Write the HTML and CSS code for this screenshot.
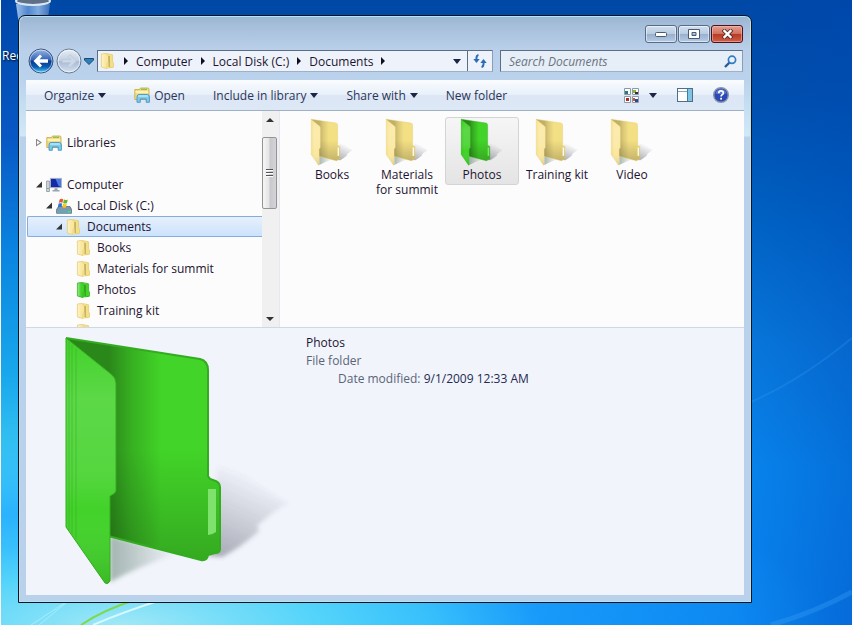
FILE: index.html
```html
<!DOCTYPE html>
<html lang="en">
<head>
    <meta charset="utf-8">
    <title>Documents</title>
    <link rel="stylesheet" href="styles.css">
</head>
<body>

<!-- shared icons -->
<svg class="defs" aria-hidden="true">
    <defs>
        <linearGradient id="g-back" x1="0" y1="0" x2="1" y2="0">
            <stop offset="0.28" stop-color="#000" stop-opacity=".36"/>
            <stop offset="0.42" stop-color="#000" stop-opacity=".18"/>
            <stop offset="0.62" stop-color="#000" stop-opacity="0"/>
        </linearGradient>
        <linearGradient id="g-low" x1="0" y1="0" x2="0" y2="1">
            <stop offset="0.5" stop-color="#000" stop-opacity="0"/>
            <stop offset="1" stop-color="#000" stop-opacity=".2"/>
        </linearGradient>
        <linearGradient id="g-front" x1="0" y1="0" x2="0" y2="1">
            <stop offset="0" stop-color="#fff" stop-opacity="0"/>
            <stop offset="0.25" stop-color="#fff" stop-opacity=".14"/>
            <stop offset="0.55" stop-color="#fff" stop-opacity=".1"/>
            <stop offset="0.7" stop-color="#fff" stop-opacity="0"/>
            <stop offset="1" stop-color="#000" stop-opacity=".12"/>
        </linearGradient>
        <linearGradient id="g-shade" x1="0.1" y1="0.95" x2="0.45" y2="0.05">
            <stop offset="0" stop-color="#556" stop-opacity=".45"/>
            <stop offset="0.5" stop-color="#556" stop-opacity=".22"/>
            <stop offset="1" stop-color="#556" stop-opacity="0"/>
        </linearGradient>
        <linearGradient id="g-shade2" x1="0" y1="0" x2="1" y2="0">
            <stop offset="0" stop-color="#465" stop-opacity=".45"/>
            <stop offset="1" stop-color="#465" stop-opacity="0"/>
        </linearGradient>
        <filter id="soft"><feGaussianBlur stdDeviation="2"/></filter>
        <linearGradient id="g-orb" x1="0" y1="0" x2="0" y2="1">
            <stop offset="0" stop-color="#9bb9e6"/>
            <stop offset="0.46" stop-color="#2f62b4"/>
            <stop offset="0.5" stop-color="#07398f"/>
            <stop offset="0.75" stop-color="#0a5cb8"/>
            <stop offset="1" stop-color="#52d8fa"/>
        </linearGradient>
        <linearGradient id="g-orb2" x1="0" y1="0" x2="0" y2="1">
            <stop offset="0" stop-color="#e6edf6"/>
            <stop offset="0.48" stop-color="#c3d0e2"/>
            <stop offset="0.52" stop-color="#a9bcd4"/>
            <stop offset="1" stop-color="#d4e1f0"/>
        </linearGradient>
        <linearGradient id="g-gold" x1="0" y1="0" x2="1" y2="0">
            <stop offset="0" stop-color="#fff" stop-opacity=".5"/>
            <stop offset="1" stop-color="#fff" stop-opacity="0"/>
        </linearGradient>
        <linearGradient id="g-bin" x1="0" y1="0" x2="1" y2="0">
            <stop offset="0" stop-color="#9cc0e8"/>
            <stop offset="0.35" stop-color="#4f86cc"/>
            <stop offset="0.65" stop-color="#7fabdf"/>
            <stop offset="1" stop-color="#3a6fb8"/>
        </linearGradient>

        <symbol id="folder" viewBox="0 0 256 256">
            <path d="M168 134 L196 144 Q214 158 238 171 Q222 180 207 194 L209 199 Q190 216 172 225 L158 224Z" fill="url(#g-shade)" filter="url(#soft)"/>
            <path d="M60 204 L128 221 Q92 233 60 250Z" fill="url(#g-shade2)" filter="url(#soft)"/>
            <path class="back" d="M16 6 L150 27 Q158 29 158 38 L158 144 Q159 147 163 148 Q170 150 170 155 L170 217 Q170 221 165 221 L158 223 Q157 229 151 228 L58 204 L40 60Z"/>
            <path class="dark" d="M16 6 L150 27 Q158 29 158 38 L158 144 Q159 147 163 148 Q170 150 170 155 L170 217 Q170 221 165 221 L158 223 Q157 229 151 228 L58 204 L40 60Z" fill="url(#g-back)"/>
            <path class="edge" d="M16 6 L150 27 Q158 29 158 38 L158 144 Q159 147 163 148 Q170 150 170 155 L170 217 Q170 221 165 221 L158 223 Q157 229 151 228 L58 204" fill="url(#g-low)" stroke-width="2"/>
            <path class="tab" d="M158 157 H166 V200 Q162 203 158 203Z"/>
            <path class="front" d="M16 6 L61 42 Q66 46 66 51 L66 159 Q65 162 60 164 L60 249 Q58 253 55 251 L16 195Z"/>
            <path class="edge" d="M16 6 L61 42 Q66 46 66 51 L66 159 Q65 162 60 164 L60 249 Q58 253 55 251 L16 195Z" fill="url(#g-front)" stroke-width="1"/>
            <path class="rib" d="M19 10 V198 M22 13 V202 M26 17 V207" fill="none" stroke-width="1"/>
        </symbol>

        <symbol id="folder-sm" viewBox="0 0 16 16">
            <path class="back" d="M6 1 L12 1.6 L12.6 2 V9 L13.5 10 V14 L12 15 H6Z"/>
            <path class="front" d="M1.4 1 L6.2 .4 L8.4 3 V15 L6.6 15.8 L1.4 14Z"/>
            <path d="M1.4 1 L5 .6 V15 L1.4 14Z" fill="url(#g-gold)"/>
            <path class="edge" d="M1.4 14 V1 L6.2 .4 L12.6 1.8 V9 L13.5 10 V14.2 L8.4 15 M6.2 .6 L8.4 3 V9 L7 10.5 V15.6 L1.4 14" fill="none" stroke-width=".7"/>
            <path d="M9.2 3 V14" stroke="#000" stroke-opacity=".22" stroke-width="1.4"/>
        </symbol>

        <symbol id="library" viewBox="0 0 16 16">
            <path d="M.8 2.5 H5.5 L6.5 1 H14 Q15 1 15 2.5 V12.5 H.8Z" fill="#f3dd7c" stroke="#c9a53d" stroke-width=".8"/>
            <path d="M1.5 5 H14.3" stroke="#fffbd8" stroke-width="1.4"/>
            <path d="M7 2.3 H13" stroke="#6dbb5b" stroke-width="1"/>
            <path d="M3 9.500 Q3 7.500 5 7.500 H13 Q15.400 7.500 15.400 10 V15.300 H12.200 V12 H6.300 V15.300 H3Z" fill="#7ccbee" stroke="#3a8dc0" stroke-width=".8"/>
            <path d="M4.2 9 H14" stroke="#d8f3ff" stroke-width="1"/>
        </symbol>

        <symbol id="computer" viewBox="0 0 16 16">
            <path d="M.6 4 H3.4 V14.5 H.6Z" fill="#d4d8dc" stroke="#7d858e" stroke-width=".7"/>
            <path d="M1.2 11.5 H2.8" stroke="#4bb44b"/>
            <path d="M4.4 1.4 H15.4 V10.6 H4.4Z" fill="#1528a8" stroke="#a9b4c4" stroke-width="1"/>
            <path d="M9.5 2 H15 V10 L12.5 9Z" fill="#4a78e4"/>
            <path d="M8.5 11.2 H11.5 V13 H13.5 V14.6 H6.5 V13 H8.5Z" fill="#9aa4b0"/>
        </symbol>

        <symbol id="disk" viewBox="0 0 16 16">
            <path d="M2.5 8.5 H14 L15.6 11.5 V15.3 H.6 V11.5Z" fill="#7f97a6" stroke="#4d6270" stroke-width=".7"/>
            <path d="M1 12 H15.2 V15 H1Z" fill="#6ba3b8"/>
            <path d="M12 13.6 H14.4" stroke="#3df05a" stroke-width="1.2"/>
            <path d="M3.6 1.4 Q5.5 .2 7.2 1.3 L6.4 4.8 Q4.6 3.9 2.8 4.9Z" fill="#e9562a"/>
            <path d="M7.9 1.6 Q9.8 2.6 11.8 1.5 L11 5 Q9 6 7.1 5Z" fill="#6bb52e"/>
            <path d="M2.6 5.6 Q4.5 4.7 6.2 5.6 L5.4 9.2 Q3.6 8.3 1.8 9.2Z" fill="#2b74d2"/>
            <path d="M7 5.8 Q8.8 6.7 10.8 5.7 L10 9.2 Q8 10.2 6.2 9.3Z" fill="#f7c21d"/>
        </symbol>
    </defs>
</svg>

<div class="desktop">
    <svg class="rays" viewBox="0 0 851 625" preserveAspectRatio="none" aria-hidden="true">
        <path d="M80 625 Q102 610 134 600" stroke="#7fd84a" stroke-width="2"/>
        <path d="M92 625 Q122 612 160 600" stroke="#d6f8ff" stroke-width="2"/>
        <path d="M30 625 L68 600 M38 625 L66 602" stroke="#a5ecff" stroke-width="1"/>
        <path d="M750 402 Q800 380 851 338" stroke="#3aa0f5" stroke-opacity=".25" stroke-width="2"/>
        <path d="M770 625 Q815 612 851 592" stroke="#3aa0f5" stroke-opacity=".35" stroke-width="5"/>
    </svg>

    <div class="bin">
        <svg width="36" height="48" viewBox="0 0 36 48" aria-hidden="true">
            <path d="M1 4 L7 46 H29 L35 4Z" fill="url(#g-bin)"/>
            <ellipse cx="18" cy="1" rx="17" ry="4" fill="#5e6f86" stroke="#d9e6f4" stroke-width="2"/>
        </svg>
        <span>Recycle Bin</span>
    </div>

    <main class="window">
        <div class="caption">
            <button class="cap" aria-label="Minimize"><svg width="12" height="5" viewBox="0 0 12 5"><rect x=".5" y=".5" width="11" height="4" rx="1" fill="#fff" stroke="#4a5a70"/></svg></button>
            <button class="cap" aria-label="Maximize"><svg width="12" height="10" viewBox="0 0 12 10"><path d="M.5 .5 H11.500 V9.500 H.5Z M4 3.500 H8 V6.500 H4Z" fill="#fff" fill-rule="evenodd" stroke="#4a5a70"/></svg></button>
            <button class="cap close" aria-label="Close"><svg width="13" height="10" viewBox="0 0 13 10"><path d="M3.500 2 L9.500 8 M9.500 2 L3.500 8" stroke="#5a2a2a" stroke-width="4" stroke-linecap="square"/><path d="M3.500 2 L9.500 8 M9.500 2 L3.500 8" stroke="#fff" stroke-width="2.400" stroke-linecap="square"/></svg></button>
        </div>

        <div class="nav">
            <div class="travel">
                <button class="orb" aria-label="Back"><svg width="26" height="26" viewBox="0 0 26 26"><circle cx="13" cy="13" r="12" fill="url(#g-orb)" stroke="#3d5478"/><circle cx="13" cy="13" r="11" fill="none" stroke="#fff" stroke-opacity=".5"/><path d="M5.500 13 L12 6.500 L14 8.500 L11.500 11.300 H20 V14.700 H11.500 L14 17.500 L12 19.500Z" fill="#fff"/></svg></button>
                <button class="orb" aria-label="Forward"><svg width="26" height="26" viewBox="0 0 26 26"><circle cx="13" cy="13" r="12" fill="url(#g-orb2)" stroke="#6b7d96"/><circle cx="13" cy="13" r="10.800" fill="none" stroke="#fff" stroke-opacity=".6"/><path d="M20.500 13 L14 6.500 L12 8.500 L14.500 11.300 H6 V14.700 H14.500 L12 17.500 L14 19.500Z" fill="#ccd8e8" stroke="#b4c3d6" stroke-width=".6"/></svg></button>
                <button class="recent" aria-label="Recent pages"><svg width="10" height="7" viewBox="0 0 10 7"><path d="M.5 .5 H9.500 V2 L5 6.500 L.5 2Z" fill="#2d7fb8" stroke="#174a78"/></svg></button>
            </div>
            <div class="address">
                <svg class="ico" width="16" height="16"><use href="#folder-sm"/></svg>
                <i class="arrow"></i>
                <a href="#">Computer</a>
                <i class="arrow"></i>
                <a href="#">Local Disk (C:)</a>
                <i class="arrow"></i>
                <a href="#">Documents</a>
                <i class="arrow"></i>
                <button class="history" aria-label="Previous locations"><i class="down"></i></button>
                <button class="refresh" aria-label="Refresh"><svg width="14" height="14" viewBox="0 0 14 14"><path d="M5.500 1 Q3 1.500 3.500 6" fill="none" stroke="#2d6cb5" stroke-width="2"/><path d="M.3 5 H6.700 L3.500 9Z" fill="#2d6cb5"/><path d="M8.500 13 Q11 12.500 10.500 8" fill="none" stroke="#2d6cb5" stroke-width="2"/><path d="M7.300 9 H13.700 L10.500 5Z" fill="#2d6cb5"/></svg></button>
            </div>
            <div class="search">
                <input type="text" placeholder="Search Documents" aria-label="Search Documents">
                <svg width="13" height="13" viewBox="0 0 13 13" aria-hidden="true"><path d="M1 12 L5.500 7.500" stroke="#2a5a9c" stroke-width="2.400"/><circle cx="8" cy="4.800" r="3.600" fill="#e4f2fc" stroke="#3579c0" stroke-width="1.700"/></svg>
            </div>
        </div>

        <div class="client">
            <div class="toolbar">
                <button>Organize<i class="down"></i></button>
                <button class="open"><svg width="16" height="16"><use href="#library"/></svg>Open</button>
                <button>Include in library<i class="down"></i></button>
                <button>Share with<i class="down"></i></button>
                <button>New folder</button>
                <div class="right">
                    <button aria-label="Change view">
                        <svg width="15" height="15" viewBox="0 0 15 15"><path d="M.5 .5 H6.500 V6.500 H.5Z M8.500 .5 H14.500 V6.500 H8.500Z M.5 8.500 H6.500 V14.500 H.5Z M8.500 8.500 H14.500 V14.500 H8.500Z" fill="#fff" stroke="#8b99a8"/><path d="M1 3 H4 V6 H1Z" fill="#2e7d6c"/><path d="M9 2 H12 V5 H9Z" fill="#8cb82c"/><path d="M11 4 H14 V6 H11Z" fill="#333"/><path d="M2 10 H5 V13 H2Z" fill="#b22a1c"/><path d="M9 10 H11 V13 H9Z" fill="#d2502a"/><path d="M11 11 H14 V14 H11Z" fill="#264a9c"/></svg>
                        <i class="down"></i>
                    </button>
                    <button aria-label="Preview pane"><svg width="16" height="14" viewBox="0 0 16 14"><rect x=".5" y=".5" width="15" height="13" fill="#fff" stroke="#4c7088"/><path d="M1 3.500 H10" stroke="#8ea6b6"/><rect x="10" y="1" width="5" height="12" fill="#7fc4e4"/><path d="M10.500 1 V13" stroke="#3e7e9e"/></svg></button>
                    <button aria-label="Help"><svg width="16" height="16" viewBox="0 0 16 16"><circle cx="8" cy="8" r="7.300" fill="#2c49b4" stroke="#8a94ae" stroke-width="1.400"/><path d="M2.500 6.500 A5.700 5.700 0 0 1 13.500 6.500 Q8 8 2.500 6.500Z" fill="#7f98dc" opacity=".6"/><path d="M5.700 6.200 Q5.800 3.900 8 3.900 Q10.300 3.900 10.300 5.900 Q10.300 7.200 8.900 7.900 Q8.100 8.400 8.100 9.600" fill="none" stroke="#fff" stroke-width="1.700"/><rect x="7.200" y="10.800" width="1.800" height="1.800" fill="#fff"/></svg></button>
                </div>
            </div>

            <div class="panes">
                <ul class="tree">
                    <li class="top"><i class="closed"></i><svg class="ico" width="16" height="16"><use href="#library"/></svg><a href="#">Libraries</a></li>
                    <li class="top"><i class="opened"></i><svg class="ico" width="16" height="16"><use href="#computer"/></svg><a href="#">Computer</a></li>
                    <li class="l1"><i class="opened"></i><svg class="ico" width="16" height="16"><use href="#disk"/></svg><a href="#">Local Disk (C:)</a></li>
                    <li class="l2 selected"><i class="opened"></i><svg class="ico" width="16" height="16"><use href="#folder-sm"/></svg><a href="#">Documents</a></li>
                    <li class="l3"><svg class="ico" width="16" height="16"><use href="#folder-sm"/></svg><a href="#">Books</a></li>
                    <li class="l3"><svg class="ico" width="16" height="16"><use href="#folder-sm"/></svg><a href="#">Materials for summit</a></li>
                    <li class="l3"><svg class="ico green" width="16" height="16"><use href="#folder-sm"/></svg><a href="#">Photos</a></li>
                    <li class="l3"><svg class="ico" width="16" height="16"><use href="#folder-sm"/></svg><a href="#">Training kit</a></li>
                    <li class="l3"><svg class="ico" width="16" height="16"><use href="#folder-sm"/></svg></li>
                </ul>
                <div class="scroll">
                    <i class="up"></i>
                    <div class="thumb"><i></i><i></i><i></i></div>
                    <i class="dn"></i>
                </div>
                <div class="files">
                    <a class="file" href="#"><svg width="48" height="48"><use href="#folder"/></svg>Books</a>
                    <a class="file" href="#"><svg width="48" height="48"><use href="#folder"/></svg>Materials for summit</a>
                    <a class="file picked" href="#"><svg class="green" width="48" height="48"><use href="#folder"/></svg>Photos</a>
                    <a class="file" href="#"><svg width="48" height="48"><use href="#folder"/></svg>Training kit</a>
                    <a class="file" href="#"><svg width="48" height="48"><use href="#folder"/></svg>Video</a>
                </div>
            </div>

            <div class="details">
                <svg class="green" width="256" height="256"><use href="#folder"/></svg>
                <div class="info">
                    <div class="name">Photos</div>
                    <div>File folder</div>
                    <div class="date">Date modified: <span>9/1/2009 12:33 AM</span></div>
                </div>
            </div>
        </div>
    </main>
</div>

</body>
</html>
```
FILE: styles.css
```css
* {
    box-sizing: border-box;
}

body {
    margin: 0;
    padding: 0 2px 5px 1px;
    background: #fdfdfd;
    font-family: "Open Sans", "Noto Sans", sans-serif;
    font-size: 12px;
    line-height: 15px;
    color: #1e1432;
}

a {
    color: inherit;
    text-decoration: none;
}

button {
    font: inherit;
    color: inherit;
    background: none;
    border: none;
    padding: 0;
    display: flex;
    align-items: center;
    justify-content: center;
}

svg {
    display: block;
    flex: none;
}

.defs {
    position: absolute;
    width: 0;
    height: 0;
}

/* folder colours */
.back { fill: var(--back, #f4e084); }
.dark { opacity: var(--dark, .6); }
.front { fill: var(--front, #fbe8a0); }
.edge { stroke: var(--edge, #e4c868); }
.tab { fill: var(--tab, #fffbe6); }
.rib { stroke: var(--edge, #e4c868); stroke-opacity: .5; }

.green {
    --back: #42d428;
    --dark: 1;
    --front: #42d22a;
    --edge: #34ac20;
    --tab: #7ee26c;
}

/* desktop */
.desktop {
    position: relative;
    display: flex;
    min-height: calc(100vh - 5px);
    padding: 15px 100px 22px 17px;
    overflow: hidden;
    background:
        radial-gradient(ellipse 700px 190px at 120px 100%, #a0e8f6 0%, #54d4fa 28%, #38c0fc 44%, rgba(30, 165, 255, .7) 60%, rgba(10, 140, 245, 0) 100%),
        linear-gradient(180deg, #0046a8 0%, #0858c4 22%, #0a84e0 40%, #18a8ec 60%, #44d0f6 78%, #50dcf8 100%) 0 0 / 17px 100% no-repeat,
        linear-gradient(90deg, rgba(0, 70, 180, 0) 86%, rgba(0, 70, 180, .35) 100%),
        linear-gradient(180deg, #0048a6 0%, #0050ae 16%, #0063c4 35%, #0878dc 55%, #0886ee 75%, #0880ee 100%);
}

.rays {
    position: absolute;
    top: 0;
    left: 0;
    width: 100%;
    height: 100%;
    fill: none;
}

.bin {
    position: absolute;
    top: 0;
    left: 1px;
    display: flex;
    flex-direction: column;
    align-items: center;
    color: #fff;
    text-shadow: 1px 1px 2px #000;
}

/* window frame */
.window {
    position: relative;
    flex: 1;
    display: flex;
    flex-direction: column;
    padding: 8px 7px 7px;
    border: 1px solid #0a1420;
    border-radius: 7px 7px 0 0;
    background: linear-gradient(180deg, #9ab5d2 0, #a8c0dc 12px, #bad0ea 34px, #bad2ec 64px, #c6def2 90px, #d2e8f8 120px, #b9d1ea 121px);
    box-shadow: inset 0 0 0 1px #b4e4f4;
}

.caption {
    display: flex;
    justify-content: flex-end;
    gap: 1px;
    padding: 1px 1px 0;
}

.cap {
    width: 32px;
    height: 18px;
    border: 1px solid #5a6c84;
    border-radius: 3px;
    background: linear-gradient(180deg, #d2e0f0 0%, #b8cce2 48%, #98b0cc 50%, #b4cce6 100%);
    box-shadow: inset 0 0 0 1px rgba(255, 255, 255, .5);
}

.close {
    border-color: #4a1020;
    background: linear-gradient(180deg, #e4a090 0%, #d07060 48%, #b83820 50%, #d0604a 100%);
    box-shadow: inset 0 0 0 1px rgba(255, 200, 190, .5);
}

.nav {
    display: flex;
    align-items: center;
    gap: 7px;
    padding: 5px 1px 6px 2px;
}

.travel {
    display: flex;
    align-items: center;
    gap: 2px;
    width: 62px;
}

.address,
.search {
    display: flex;
    align-items: center;
    height: 22px;
    border: 1px solid #5c6e86;
    border-right-color: #8c9cb4;
    border-bottom-color: #a0b0c8;
    background: #eef3fb;
}

.address {
    flex: 1;
    gap: 8px;
    padding-left: 2px;
}

.search {
    width: 34%;
    padding: 0 5px 0 8px;
    background: #e6eef8;
}

.search input {
    flex: 1;
    min-width: 0;
    padding: 0;
    border: none;
    outline: none;
    background: none;
    font: inherit;
    font-style: italic;
}

.search input::placeholder {
    color: #6c7480;
    opacity: 1;
}

.history {
    margin-left: auto;
    width: 12px;
}

.address .refresh {
    width: 25px;
    height: 100%;
    border-left: 1px solid #5c6e86;
    margin-left: -4px;
}

.arrow {
    border: 4px solid transparent;
    border-left: 4px solid #101020;
    border-right: none;
}

.down {
    border: 4px solid transparent;
    border-top: 5px solid #1c2448;
    border-bottom: none;
}

/* toolbar */
.client {
    flex: 1;
    display: flex;
    flex-direction: column;
    background: #fcfcfc;
}

.toolbar {
    display: flex;
    align-items: center;
    height: 31px;
    padding: 0 15px 0 18px;
    gap: 28px;
    border-bottom: 1px solid #a0b0c6;
    background: linear-gradient(180deg, #fafcfe 0%, #e8f0fa 48%, #dce6f4 52%, #dde8f6 100%);
    color: #2a3558;
}

.toolbar button {
    gap: 4px;
}

.toolbar .right {
    display: flex;
    gap: 20px;
    margin-left: auto;
}

.toolbar .right button {
    gap: 10px;
}

/* tree and files */
.panes {
    display: flex;
    height: 216px;
}

.tree {
    width: 236px;
    margin: 0;
    padding: 0;
    list-style: none;
    overflow: hidden;
}

.tree li {
    display: flex;
    align-items: center;
    height: 21px;
    padding-left: 10px;
}

.tree .top {
    margin-top: 21px;
}

.tree .l1 { padding-left: 20px; }
.tree .l2 { padding-left: 30px; }
.tree .l3 { padding-left: 50px; }

.tree .ico {
    margin-right: 5px;
}

.tree .selected {
    margin-left: 1px;
    padding-left: 28px;
    border: 1px solid #84acdc;
    border-right: none;
    border-radius: 2px 0 0 2px;
    background: linear-gradient(180deg, #e6f0fc, #cce2fc);
}

.closed,
.opened {
    width: 10px;
    height: 8px;
    background: #333;
}

.closed {
    width: 6px;
    margin-right: 4px;
    background: #888;
    clip-path: polygon(0 0, 100% 50%, 0 100%, 0 0, 1px 2px, 1px 6px, 4px 4px, 1px 2px);
}

.opened {
    clip-path: polygon(6px 1px, 6px 7px, 0 7px);
}

.scroll {
    display: flex;
    flex-direction: column;
    align-items: center;
    width: 18px;
    padding: 7px 2px 6px 0;
    border-right: 1px solid #e4e8f0;
    background: #f0f0f0;
}

.up,
.dn {
    border: 4px solid transparent;
    border-bottom: 4px solid #333;
    border-top: none;
}

.dn {
    border-top: 4px solid #333;
    border-bottom: none;
    margin-top: auto;
}

.thumb {
    display: flex;
    flex-direction: column;
    align-items: center;
    justify-content: center;
    gap: 1px;
    width: 15px;
    height: 72px;
    margin-top: 15px;
    border: 1px solid #949494;
    border-radius: 2px;
    background: linear-gradient(90deg, #f6f6f6 0%, #e4e4e6 48%, #c8c8cc 52%, #d4d4d8 100%);
}

.thumb i {
    width: 7px;
    height: 2px;
    border-top: 1px solid #555;
    border-bottom: 1px solid #fff;
}

.files {
    flex: 1;
    display: flex;
    flex-wrap: wrap;
    align-items: flex-start;
    align-content: flex-start;
    gap: 1px;
    padding: 6px 0 0 15px;
}

.file {
    display: flex;
    flex-direction: column;
    align-items: center;
    gap: 1px;
    width: 74px;
    padding: 0 4px 2px;
    border: 1px solid transparent;
    border-radius: 3px;
    text-align: center;
}

.picked {
    border-color: #d4d4d4;
    background: linear-gradient(180deg, #f6f6f6, #e4e4e4);
}

/* details pane */
.details {
    flex: 1;
    display: flex;
    padding: 4px 24px;
    border-top: 1px solid #d0d8e6;
    background: #f1f4fb;
    color: #5a6478;
}

.info {
    padding-top: 2px;
    line-height: 18px;
}

.name {
    color: #1e1432;
}

.date {
    padding-left: 32px;
}

.date span {
    color: #1e2a50;
}
```
